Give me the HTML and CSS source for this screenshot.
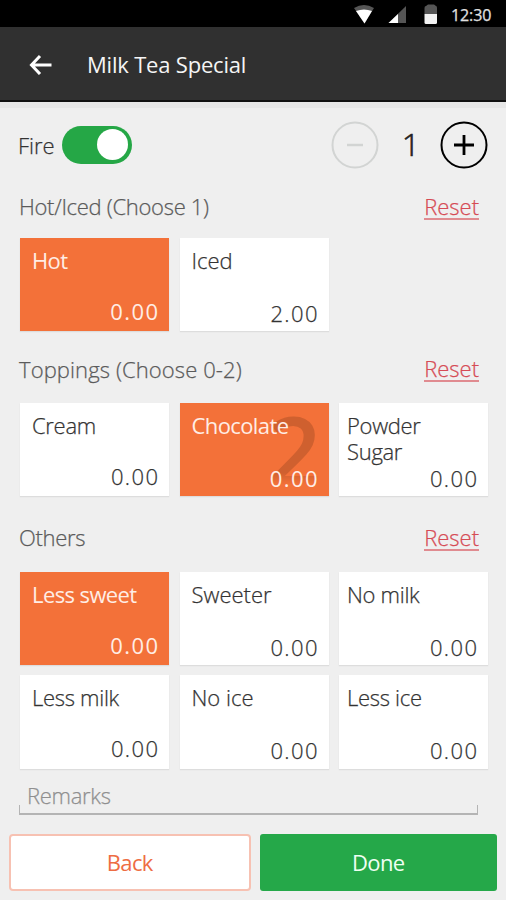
FILE: index.html
```html
<!DOCTYPE html>
<html lang="en">
<head>
<meta charset="utf-8">
<title>Milk Tea Special</title>
<link rel="stylesheet" href="styles.css">
</head>
<body>
<div class="status">
  <svg class="signals" width="80" height="27" viewBox="0 0 80 27">
    <path d="M0 8Q10 2 20 8L10.500 23.500Z" fill="#555"/>
    <path d="M2 11Q10 8 18 11L10.500 23.500Z" fill="#fff"/>
    <path d="M34.500 23L52 6V23Z" fill="#555"/>
    <path d="M34.500 23L44 14V23Z" fill="#fff"/>
    <path d="M72 6L74 4.500H80L82 6Q83 6 83 8V14H70.500V8Q70.500 6 72 6Z" fill="#555"/>
    <path d="M70.500 14H83V22.500Q83 24 81.500 24H72Q70.500 24 70.500 22.500Z" fill="#f2f2f2"/>
  </svg>
  <span class="clock">12:30</span>
</div>
<header class="appbar">
  <svg class="arrow" width="24" height="22" viewBox="0 0 24 22"><path d="M12 3L3.500 12L12 21M3.500 12H23.500" fill="none" stroke="#fff" stroke-width="3"/></svg>
  <h1 class="title">Milk Tea Special</h1>
</header>
<main class="content">
  <div class="controls">
    <span class="fire">Fire</span>
    <span class="switch"><span class="knob"></span></span>
    <div class="stepper">
      <svg width="48" height="48" viewBox="0 0 48 48" fill="none" stroke="#d2d4d3" stroke-width="2"><circle cx="24" cy="24" r="22.500"/><path d="M16 24H32" stroke-width="2.500"/></svg>
      <span class="count">1</span>
      <svg width="48" height="48" viewBox="0 0 48 48" fill="none" stroke="#000" stroke-width="2"><circle cx="24" cy="24" r="22.500"/><path d="M14 24H34M24 14V34" stroke-width="2.800"/></svg>
    </div>
  </div>
  <section class="group hot-iced">
    <div class="group-head"><h2 class="group-title tight">Hot/Iced (Choose 1)</h2><a class="reset">Reset</a></div>
    <div class="cards">
      <div class="card selected"><span class="name">Hot</span><span class="price up">0.00</span></div>
      <div class="card"><span class="name loose">Iced</span><span class="price">2.00</span></div>
    </div>
  </section>
  <section class="group toppings">
    <div class="group-head"><h2 class="group-title">Toppings (Choose 0-2)</h2><a class="reset">Reset</a></div>
    <div class="cards">
      <div class="card"><span class="name">Cream</span><span class="price up">0.00</span></div>
      <div class="card selected"><span class="badge">2</span><span class="name">Chocolate</span><span class="price">0.00</span></div>
      <div class="card third"><span class="name">Powder<br>Sugar</span><span class="price">0.00</span></div>
    </div>
  </section>
  <section class="group others">
    <div class="group-head"><h2 class="group-title tight">Others</h2><a class="reset">Reset</a></div>
    <div class="cards">
      <div class="card selected"><span class="name">Less sweet</span><span class="price up">0.00</span></div>
      <div class="card"><span class="name loose">Sweeter</span><span class="price">0.00</span></div>
      <div class="card third"><span class="name">No milk</span><span class="price">0.00</span></div>
      <div class="card tall"><span class="name">Less milk</span><span class="price up">0.00</span></div>
      <div class="card tall"><span class="name loose">No ice</span><span class="price">0.00</span></div>
      <div class="card tall third"><span class="name">Less ice</span><span class="price">0.00</span></div>
    </div>
  </section>
  <div class="remarks"><span>Remarks</span></div>
</main>
<footer class="actions">
  <div class="btn back">Back</div>
  <div class="btn done">Done</div>
</footer>
</body>
</html>
```
FILE: styles.css
```css
* { box-sizing: border-box; }
body {
  margin: 0;
  width: 506px;
  height: 900px;
  overflow: hidden;
  display: flex;
  flex-direction: column;
  background: #efefef;
  color: #333;
  font-family: "Open Sans", "Noto Sans", sans-serif;
  font-size: 22px;
  font-weight: 300;
  line-height: 26px;
  -webkit-text-stroke: 0.25px;
}
h1, h2 { margin: 0; font-size: inherit; font-weight: inherit; }
.status {
  height: 27px;
  flex: none;
  position: relative;
  z-index: 1;
  display: flex;
  align-items: center;
  justify-content: flex-end;
  padding-right: 15px;
  background: #000;
  color: #e0e0e0;
}
.signals { overflow: visible; margin-right: 17px; }
.clock { width: 40px; font-size: 16px; font-weight: 500; letter-spacing: -0.1px; white-space: nowrap; padding-top: 3px; }
.appbar {
  height: 75px;
  flex: none;
  display: flex;
  align-items: center;
  padding-left: 28px;
  background: #303030;
  border-bottom: 2px solid #111;
  box-shadow: 0 6px 0 #e7e7e7;
  color: #f5f5f5;
}
.title { margin-left: 35px; font-weight: 400; letter-spacing: -0.2px; -webkit-text-stroke: 0; }
.content { padding: 0 18px 0 20px; flex: none; }
.controls { height: 86px; display: flex; align-items: center; }
.fire { width: 42px; margin-left: -2px; }
.switch { width: 70px; height: 38px; margin-left: 2px; padding: 3px 4px; border-radius: 19px; background: #25a746; display: flex; justify-content: flex-end; }
.knob { width: 31px; height: 31px; border-radius: 50%; background: #fff; }
.stepper { margin-left: auto; display: flex; align-items: center; }
.count { width: 61px; padding-left: 3px; text-align: center; font-size: 32px; line-height: 44px; margin-top: -2px; color: #222; -webkit-text-stroke: 0.6px; }
.group-head { display: flex; justify-content: space-between; padding-right: 9px; margin-left: -1px; height: 45px; }
.group-title { color: #5b5b5b; }
.tight { letter-spacing: -0.3px; }
.reset { color: #d64b55; height: 27px; border-bottom: 2px solid #e08b90; }
.hot-iced { padding-top: 5px; }
.toppings { padding-top: 25px; }
.toppings .reset { margin-top: -1px; }
.toppings .group-head { height: 47px; }
.toppings .group-title { letter-spacing: 0.1px; }
.others { padding-top: 28px; }
.others .group-head { height: 48px; }
.cards { display: grid; grid-template-columns: repeat(3, 149px); gap: 10px 10.5px; }
.card {
  height: 93px;
  padding: 9px 11px 5px 12px;
  display: flex;
  flex-direction: column;
  position: relative;
  background: #fff;
  box-shadow: 0 1px 1px #ddd;
}
.card.tall { height: 94px; padding-bottom: 6px; }
.third { padding-left: 8px; }
.card.selected { background: #f37139; color: #ffede5; font-weight: 400; -webkit-text-stroke: 0; }
.name { position: relative; letter-spacing: -0.3px; }
.selected .name { letter-spacing: -0.6px; }
.name.loose { letter-spacing: 0; }
.price { position: relative; margin-top: auto; align-self: flex-end; letter-spacing: 1.4px; margin-right: -1.4px; }
.up { bottom: 2px; }
.badge {
  position: absolute;
  right: 7px;
  top: -3px;
  font-size: 96px;
  line-height: 98px;
  font-weight: 600;
  color: #cf602f;
  -webkit-mask-image: linear-gradient(#000 74%, transparent 86%);
  mask-image: linear-gradient(#000 74%, transparent 86%);
}
.remarks { height: 33px; margin: 13px 10px 0 -1px; padding-left: 8px; color: #8f8f8f; position: relative; }
.remarks span { letter-spacing: -0.3px; }
.remarks::after {
  content: "";
  position: absolute;
  left: 0;
  right: 0;
  bottom: 0;
  height: 8px;
  border: solid #b4b4b4;
  border-width: 0 1px 2px;
}
.actions { display: flex; gap: 9px; padding: 19px 9px 9px 9px; }
.btn { height: 57px; flex: 1; display: flex; align-items: center; justify-content: center; border-radius: 3px; font-weight: 400; padding-bottom: 1px; -webkit-text-stroke: 0; }
.back { color: #ee6d43; background: #fff; border: 2px solid #f7c1b2; border-radius: 4px; letter-spacing: -0.6px; }
.done { color: #effff2; background: #25a849; letter-spacing: -0.6px; }
```
